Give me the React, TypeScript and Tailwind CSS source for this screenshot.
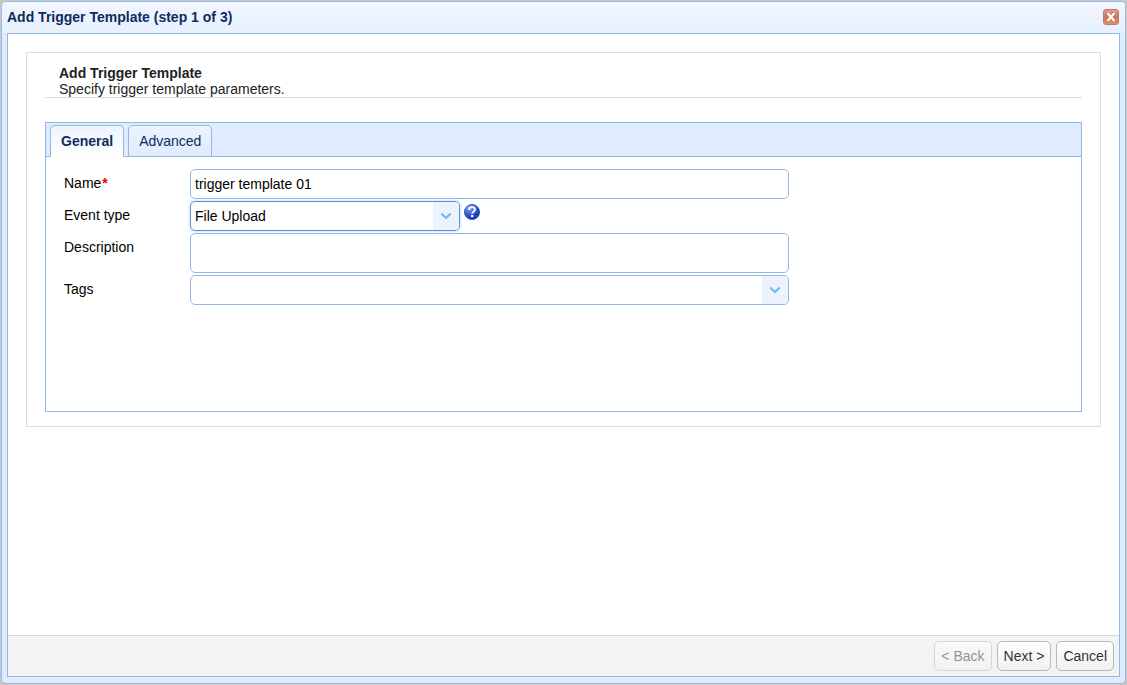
import { useState } from 'react';
import type { ReactNode } from 'react';

function CloseIcon() {
  return (
    <svg width="16" height="16" viewBox="0 0 16 16" aria-hidden="true">
      <defs>
        <linearGradient id="close-fill" x1="0" y1="0" x2="0" y2="1">
          <stop offset="0" stopColor="#e0a48e" />
          <stop offset="0.5" stopColor="#d4715c" />
          <stop offset="1" stopColor="#e0966f" />
        </linearGradient>
      </defs>
      <rect x="0.5" y="0.5" width="15" height="15" rx="2.5" fill="url(#close-fill)" stroke="#bd7a6a" />
      <path d="M5.2 4.8L10.8 11.2M10.8 4.8L5.2 11.2" stroke="#b8604e" strokeWidth="4" strokeLinecap="square" opacity="0.4" />
      <path d="M5.2 4.8L10.8 11.2M10.8 4.8L5.2 11.2" stroke="#fff" strokeWidth="2.3" strokeLinecap="square" />
    </svg>
  );
}

function HelpIcon() {
  return (
    <svg width="16" height="16" viewBox="0 0 16 16" aria-hidden="true">
      <defs>
        <radialGradient id="help-fill" cx="0.3" cy="0.2" r="0.85">
          <stop offset="0" stopColor="#8fb2ee" />
          <stop offset="0.45" stopColor="#3c6bd6" />
          <stop offset="1" stopColor="#0c2fa6" />
        </radialGradient>
      </defs>
      <circle cx="8" cy="8" r="7.6" fill="url(#help-fill)" stroke="#1f48a8" strokeWidth="0.8" />
      <path
        d="M5.2 6C5.2 4.1 6.4 3.1 8.1 3.1C9.9 3.1 11 4.1 11 5.6C11 7.4 8.2 7.6 8.2 9.8"
        fill="none"
        stroke="#fff"
        strokeWidth="1.9"
      />
      <rect x="7.1" y="11" width="2.2" height="2.2" fill="#fff" />
    </svg>
  );
}

function SelectArrow() {
  return (
    <span className="pointer-events-none absolute inset-y-px right-px flex w-[26px] items-center justify-center rounded-r-[4px] bg-[#ecf2ff]">
      <svg width="12" height="8" viewBox="0 0 12 8" aria-hidden="true">
        <path d="M1.3 1.5L6 6L10.7 1.5" fill="none" stroke="#74b9ee" strokeWidth="2.2" />
      </svg>
    </span>
  );
}

function Field({ id, label, required, children }: { id: string; label: string; required?: boolean; children: ReactNode }) {
  return (
    <div className="flex items-start">
      <label htmlFor={id} className="w-[126px] shrink-0 pt-1.5">
        {label}
        {required && <span className="ml-px font-bold text-[#f00000]">*</span>}
      </label>
      {children}
    </div>
  );
}

export default function App() {
  const [tab, setTab] = useState('general');
  const [name, setName] = useState('trigger template 01');
  const [eventType, setEventType] = useState('File Upload');
  const [description, setDescription] = useState('');
  const [tags, setTags] = useState('');

  const fieldClass = 'block w-full rounded-[5px] border border-[#94b7e8] bg-white px-1 text-black outline-none';
  const tabClass = '-mb-px h-8 rounded-t-[5px] border border-[#94b7e8] bg-linear-to-b px-2.5 text-[#0f2c5c]';
  const activeTab = 'border-b-white from-[#edf3ff] to-white font-bold';
  const inactiveTab = 'from-[#ecf3ff] to-[#e0ebff]';
  const buttonClass = 'h-[30px] rounded-[5px] border border-[#b8b8b8] bg-linear-to-b from-white to-[#f1f1f1] px-1.5 text-[#333333]';

  return (
    <div className="flex min-h-screen bg-[#c8c8c8] p-px font-['Liberation_Sans',Arial,sans-serif] text-[14px] leading-4 text-black">
      <div className="flex grow flex-col rounded-[5px] border border-[#99bbe8] bg-[#dfebff] px-[5px] pb-[6px]">
        {/* Title bar */}
        <header className="-mx-[5px] flex h-[31px] items-center justify-between rounded-t-[4px] bg-linear-to-b from-[#f1f6ff] to-[#e7f0ff] pr-1.5 pb-0.5 pl-[5px]">
          <h1 className="font-bold text-[#0f2c5c]">Add Trigger Template (step 1 of 3)</h1>
          <button type="button" aria-label="Close">
            <CloseIcon />
          </button>
        </header>

        <main className="flex grow flex-col border border-[#94b7e8] bg-white">
          <div className="grow p-[18px]">
            <section className="border border-[#dcdcdc] px-[18px] pt-3 pb-[14px]">
              <div className="border-b border-[#dcdcdc] pl-[14px] text-[#222222]">
                <h2 className="font-bold">Add Trigger Template</h2>
                <p>Specify trigger template parameters.</p>
              </div>

              <div className="mt-6 border border-[#94b7e8]">
                <div role="tablist" className="flex gap-1 border-b border-[#94b7e8] bg-[#dfebff] pt-0.5 pl-1">
                  <button
                    type="button"
                    role="tab"
                    aria-selected={tab === 'general'}
                    onClick={() => setTab('general')}
                    className={`${tabClass} ${tab === 'general' ? activeTab : inactiveTab}`}
                  >
                    General
                  </button>
                  <button
                    type="button"
                    role="tab"
                    aria-selected={tab === 'advanced'}
                    onClick={() => setTab('advanced')}
                    className={`${tabClass} ${tab === 'advanced' ? activeTab : inactiveTab}`}
                  >
                    Advanced
                  </button>
                </div>

                <div role="tabpanel" className="min-h-[254px] px-[18px] py-3">
                  {tab === 'general' && (
                    <form className="flex max-w-[725px] flex-col gap-0.5">
                      <Field id="name" label="Name" required>
                        <input
                          id="name"
                          type="text"
                          value={name}
                          onChange={(e) => setName(e.target.value)}
                          className={`${fieldClass} h-[30px]`}
                        />
                      </Field>
                      <Field id="event-type" label="Event type">
                        <div className="relative w-[270px]">
                          <select
                            id="event-type"
                            value={eventType}
                            onChange={(e) => setEventType(e.target.value)}
                            className="block h-[30px] w-full appearance-none rounded-[5px] border border-[#5c93dd] bg-white px-1 text-black shadow-[0_0_3px_#a9c8f5] outline-none"
                          >
                            <option>File Upload</option>
                          </select>
                          <SelectArrow />
                        </div>
                        <button type="button" aria-label="Help" className="ml-1 pt-[3px]">
                          <HelpIcon />
                        </button>
                      </Field>
                      <Field id="description" label="Description">
                        <textarea
                          id="description"
                          value={description}
                          onChange={(e) => setDescription(e.target.value)}
                          className={`${fieldClass} h-10 resize-none py-1`}
                        />
                      </Field>
                      <Field id="tags" label="Tags">
                        <div className="relative w-full">
                          <select
                            id="tags"
                            value={tags}
                            onChange={(e) => setTags(e.target.value)}
                            className={`${fieldClass} h-[30px] appearance-none`}
                          >
                            <option value=""></option>
                          </select>
                          <SelectArrow />
                        </div>
                      </Field>
                    </form>
                  )}
                </div>
              </div>
            </section>
          </div>

          {/* Wizard buttons */}
          <footer className="flex justify-end gap-[5px] border-t border-[#d8d8d8] bg-[#f3f3f3] p-[5px]">
            <button type="button" disabled className={`${buttonClass} opacity-50`}>
              &lt; Back
            </button>
            <button type="button" className={buttonClass}>
              Next &gt;
            </button>
            <button type="button" className={buttonClass}>
              Cancel
            </button>
          </footer>
        </main>
      </div>
    </div>
  );
}
